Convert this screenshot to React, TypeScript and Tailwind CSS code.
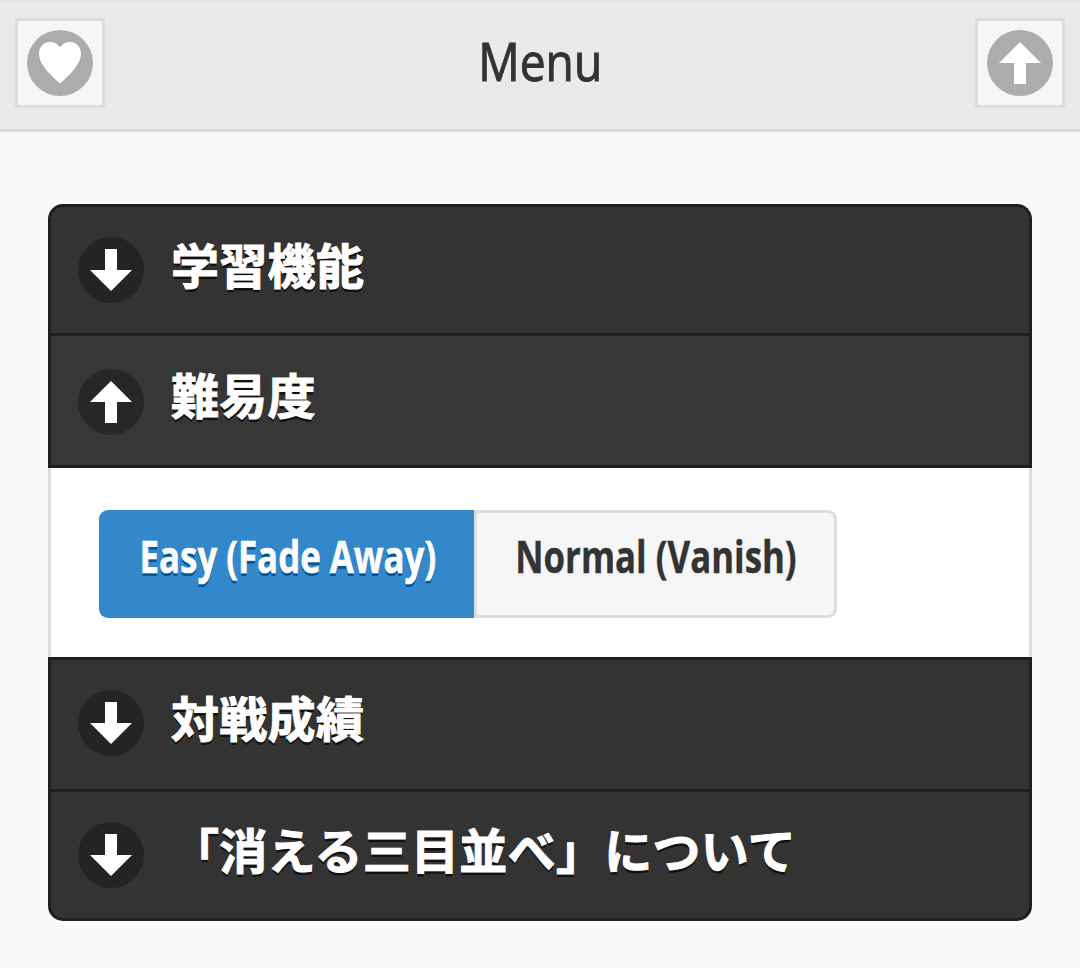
import type { ReactNode } from "react";

function Disc({ tone, children }: { tone: string; children: ReactNode }) {
  return (
    <span className={`flex size-[66px] shrink-0 items-center justify-center rounded-full ${tone}`}>
      <svg width="42" height="42" viewBox="0 0 42 42" fill="#fff">
        {children}
      </svg>
    </span>
  );
}

const Up = () => <polygon points="21,0 0,21 15,21 15,42 27,42 27,21 42,21" />;
const Down = () => <polygon points="21,42 0,21 15,21 15,0 27,0 27,21 42,21" />;
const Heart = () => (
  <path d="M21 5.2C18.5 1.8 15 0 11.3 0C4.8 0 0 4.8 0 11.5C0 22 9.5 31 21 41.6C32.5 31 42 22 42 11.5C42 4.8 37.2 0 30.7 0C27 0 23.5 1.8 21 5.2Z" />
);

function Row({ title, open, className }: { title: string; open?: boolean; className: string }) {
  return (
    <button className={`flex w-full items-start border-[#1f1f1f] px-[27px] text-left ${className}`}>
      <Disc tone={open ? "bg-[#272727]" : "bg-[#242424]"}>{open ? <Up /> : <Down />}</Disc>
      <span
        className={`ml-[27px] text-[48px] font-bold tracking-[0.3px] whitespace-nowrap text-white [-webkit-text-stroke:1px_#fff] [text-shadow:0_3px_0_#111] ${open ? "leading-[48px]" : "leading-[53px]"}`}
      >
        {title}
      </span>
    </button>
  );
}

export default function App() {
  return (
    <div className="h-[968px] w-full overflow-hidden bg-[#f9f9f9] font-['Open_Sans','Noto_Sans_CJK_JP',sans-serif] text-[#333]">
      <header className="flex h-[132px] items-start justify-between border-t border-b-[3px] border-t-[#e2e2e2] border-b-[#ddd] bg-[#e9e9e9] px-[15px] pt-[17px]">
        <button className="flex size-[90px] items-center justify-center border-[3px] border-[#ddd] bg-[#f6f6f6]">
          <Disc tone="bg-[#acacac]"><Heart /></Disc>
        </button>
        <h1 className="text-[53px] leading-[86px] font-medium [-webkit-text-stroke:1px_#333] [text-shadow:0_3px_0_#eee]">
          <span className="inline-block scale-x-[0.87]">Menu</span>
        </h1>
        <button className="flex size-[90px] items-center justify-center border-[3px] border-[#ddd] bg-[#f6f6f6]">
          <Disc tone="bg-[#acacac]"><Up /></Disc>
        </button>
      </header>

      <main className="px-12 pt-[72px] font-['Noto_Sans_CJK_JP',sans-serif]">
        <Row title="学習機能" className="h-[129px] rounded-t-[15px] border-x-[3px] border-t-[3px] bg-[#333] pt-[30px]" />
        <Row title="難易度" open className="h-[135px] border-[3px] bg-[#373737] pt-[33px]" />
        <div className="flex h-[189px] items-start border-x-[3px] border-[#ddd] bg-white px-12 pt-[42px] font-['Open_Sans',sans-serif]">
          <button className="flex h-[108px] w-[375px] justify-center rounded-l-[9px] bg-[#38c] pl-[3px] text-[45.5px] leading-[91px] font-bold whitespace-nowrap text-white [-webkit-text-stroke:0.6px_#fff] [text-shadow:0_3px_0_#059]">
            <span className="inline-block scale-x-[0.765]">Easy (Fade Away)</span>
          </button>
          <button className="flex h-[108px] w-[363px] justify-center rounded-r-[9px] border-[3px] border-[#ddd] bg-[#f6f6f6] text-[45.5px] leading-[85px] font-bold whitespace-nowrap [-webkit-text-stroke:0.4px_#333] [text-shadow:0_3px_0_#f3f3f3]">
            <span className="inline-block scale-x-[0.765]">Normal (Vanish)</span>
          </button>
        </div>
        <Row title="対戦成績" className="h-[132px] border-x-[3px] border-t-[3px] bg-[#333] pt-[30px]" />
        <Row title="「消える三目並べ」について" className="h-[132px] rounded-b-[15px] border-[3px] bg-[#333] pt-[30px]" />
      </main>
    </div>
  );
}
